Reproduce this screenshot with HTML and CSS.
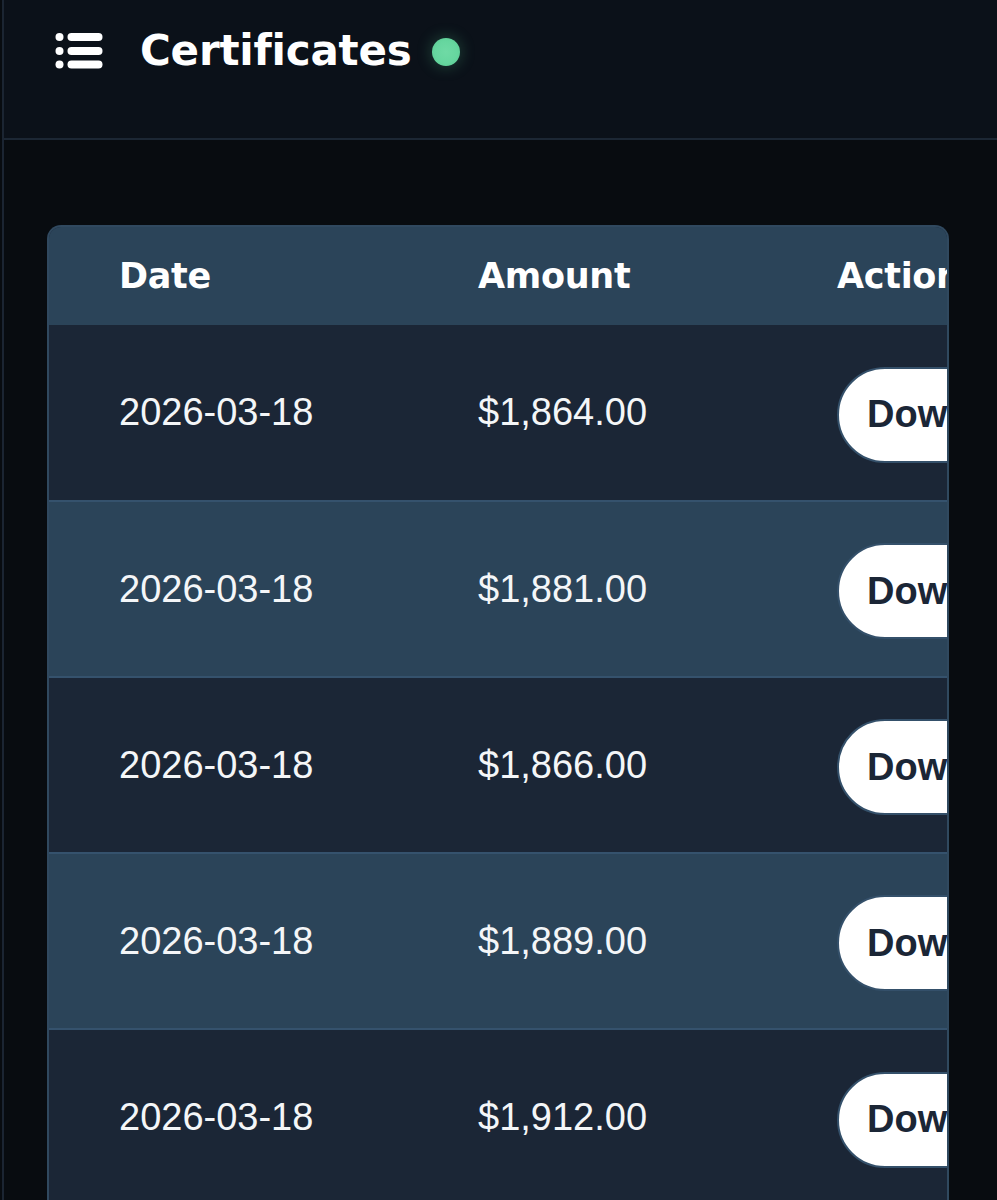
FILE: index.html
```html
<!DOCTYPE html>
<html lang="en">
<head>
    <meta charset="UTF-8">
    <meta name="viewport" content="width=device-width, initial-scale=1.0">
    <title>Certificates</title>
    <link rel="stylesheet" href="styles.css">
</head>
<body>
    <div class="page">
        <header class="topbar">
            <button class="menu-btn" aria-label="Menu">
                <svg width="48" height="36" viewBox="0 0 48 36">
                    <circle cx="4.5" cy="4" r="4" fill="#fff"/>
                    <circle cx="4.5" cy="18" r="4" fill="#fff"/>
                    <circle cx="4.5" cy="31.5" r="4" fill="#fff"/>
                    <rect x="12.5" y="0" width="35" height="8" rx="4" fill="#fff"/>
                    <rect x="12.5" y="14" width="35" height="8" rx="4" fill="#fff"/>
                    <rect x="12.5" y="27.5" width="35" height="8" rx="4" fill="#fff"/>
                </svg>
            </button>
            <h1 class="title">Certificates</h1>
            <span class="status-dot"></span>
        </header>

        <main class="content">
            <div class="card">
                <table class="cert-table">
                    <thead>
                        <tr>
                            <th>Date</th>
                            <th>Amount</th>
                            <th>Actions</th>
                        </tr>
                    </thead>
                    <tbody>
                        <tr>
                            <td>2026-03-18</td>
                            <td>$1,864.00</td>
                            <td><button class="download">Download</button></td>
                        </tr>
                        <tr>
                            <td>2026-03-18</td>
                            <td>$1,881.00</td>
                            <td><button class="download">Download</button></td>
                        </tr>
                        <tr>
                            <td>2026-03-18</td>
                            <td>$1,866.00</td>
                            <td><button class="download">Download</button></td>
                        </tr>
                        <tr>
                            <td>2026-03-18</td>
                            <td>$1,889.00</td>
                            <td><button class="download">Download</button></td>
                        </tr>
                        <tr>
                            <td>2026-03-18</td>
                            <td>$1,912.00</td>
                            <td><button class="download">Download</button></td>
                        </tr>
                    </tbody>
                </table>
            </div>
        </main>
    </div>
</body>
</html>
```

FILE: styles.css
```css
html, body {
    margin: 0;
    padding: 0;
    background-color: #080c10;
    height: 100%;
    overflow: hidden;
}

body {
    font-family: "Liberation Sans", Arial, sans-serif;
    color: #fff;
}

.page {
    margin-left: 2px;
    border-left: 2px solid #1b2532;
    min-height: 100%;
}

.topbar {
    height: 140px;
    box-sizing: border-box;
    background-color: #0b1119;
    border-bottom: 2px solid #1c2734;
    display: flex;
    align-items: center;
    padding: 0 0 36px 51px;
}

.menu-btn {
    background: none;
    border: none;
    padding: 0;
    display: flex;
    margin-right: 37px;
}

.title {
    margin: 0;
    font-family: "DejaVu Sans", sans-serif;
    font-weight: bold;
    font-size: 42px;
    letter-spacing: -0.2px;
    line-height: 1;
}

.status-dot {
    width: 28px;
    height: 28px;
    border-radius: 50%;
    margin-left: 20px;
    margin-top: 2px;
    background: radial-gradient(circle, #6fdaa5 0%, #66d69f 55%, #57c98f 100%);
    box-shadow: 0 0 16px rgba(90, 210, 150, 0.3);
}

.content {
    padding: 85px 48px 0 43px;
}

.card {
    border: 2px solid #30495f;
    border-bottom: none;
    border-radius: 14px 14px 0 0;
    overflow: hidden;
    background-color: #1b2636;
}

.cert-table {
    border-collapse: collapse;
    table-layout: fixed;
    width: 1077px;
}

.cert-table th,
.cert-table td {
    width: 359px;
    box-sizing: border-box;
    text-align: left;
    padding: 0 0 0 70px;
    white-space: nowrap;
}

.cert-table th {
    height: 98px;
    background-color: #2b4459;
    font-family: "DejaVu Sans", sans-serif;
    font-weight: bold;
    font-size: 35px;
    letter-spacing: -0.3px;
}

.cert-table td {
    height: 176px;
    font-size: 38px;
    color: #f4f6f8;
}

.cert-table tbody tr {
    background-color: #1b2636;
}

.cert-table tbody tr:nth-child(even) {
    background-color: #2b4459;
}

.cert-table tbody tr + tr {
    border-top: 2px solid #35526d;
}

.download {
    height: 96px;
    margin-top: 4px;
    padding: 0 30px 0 28px;
    border-radius: 48px;
    border: 2px solid #34506a;
    background-color: #fff;
    color: #1b2636;
    font-family: "Liberation Sans", Arial, sans-serif;
    font-weight: bold;
    font-size: 38px;
}
```
